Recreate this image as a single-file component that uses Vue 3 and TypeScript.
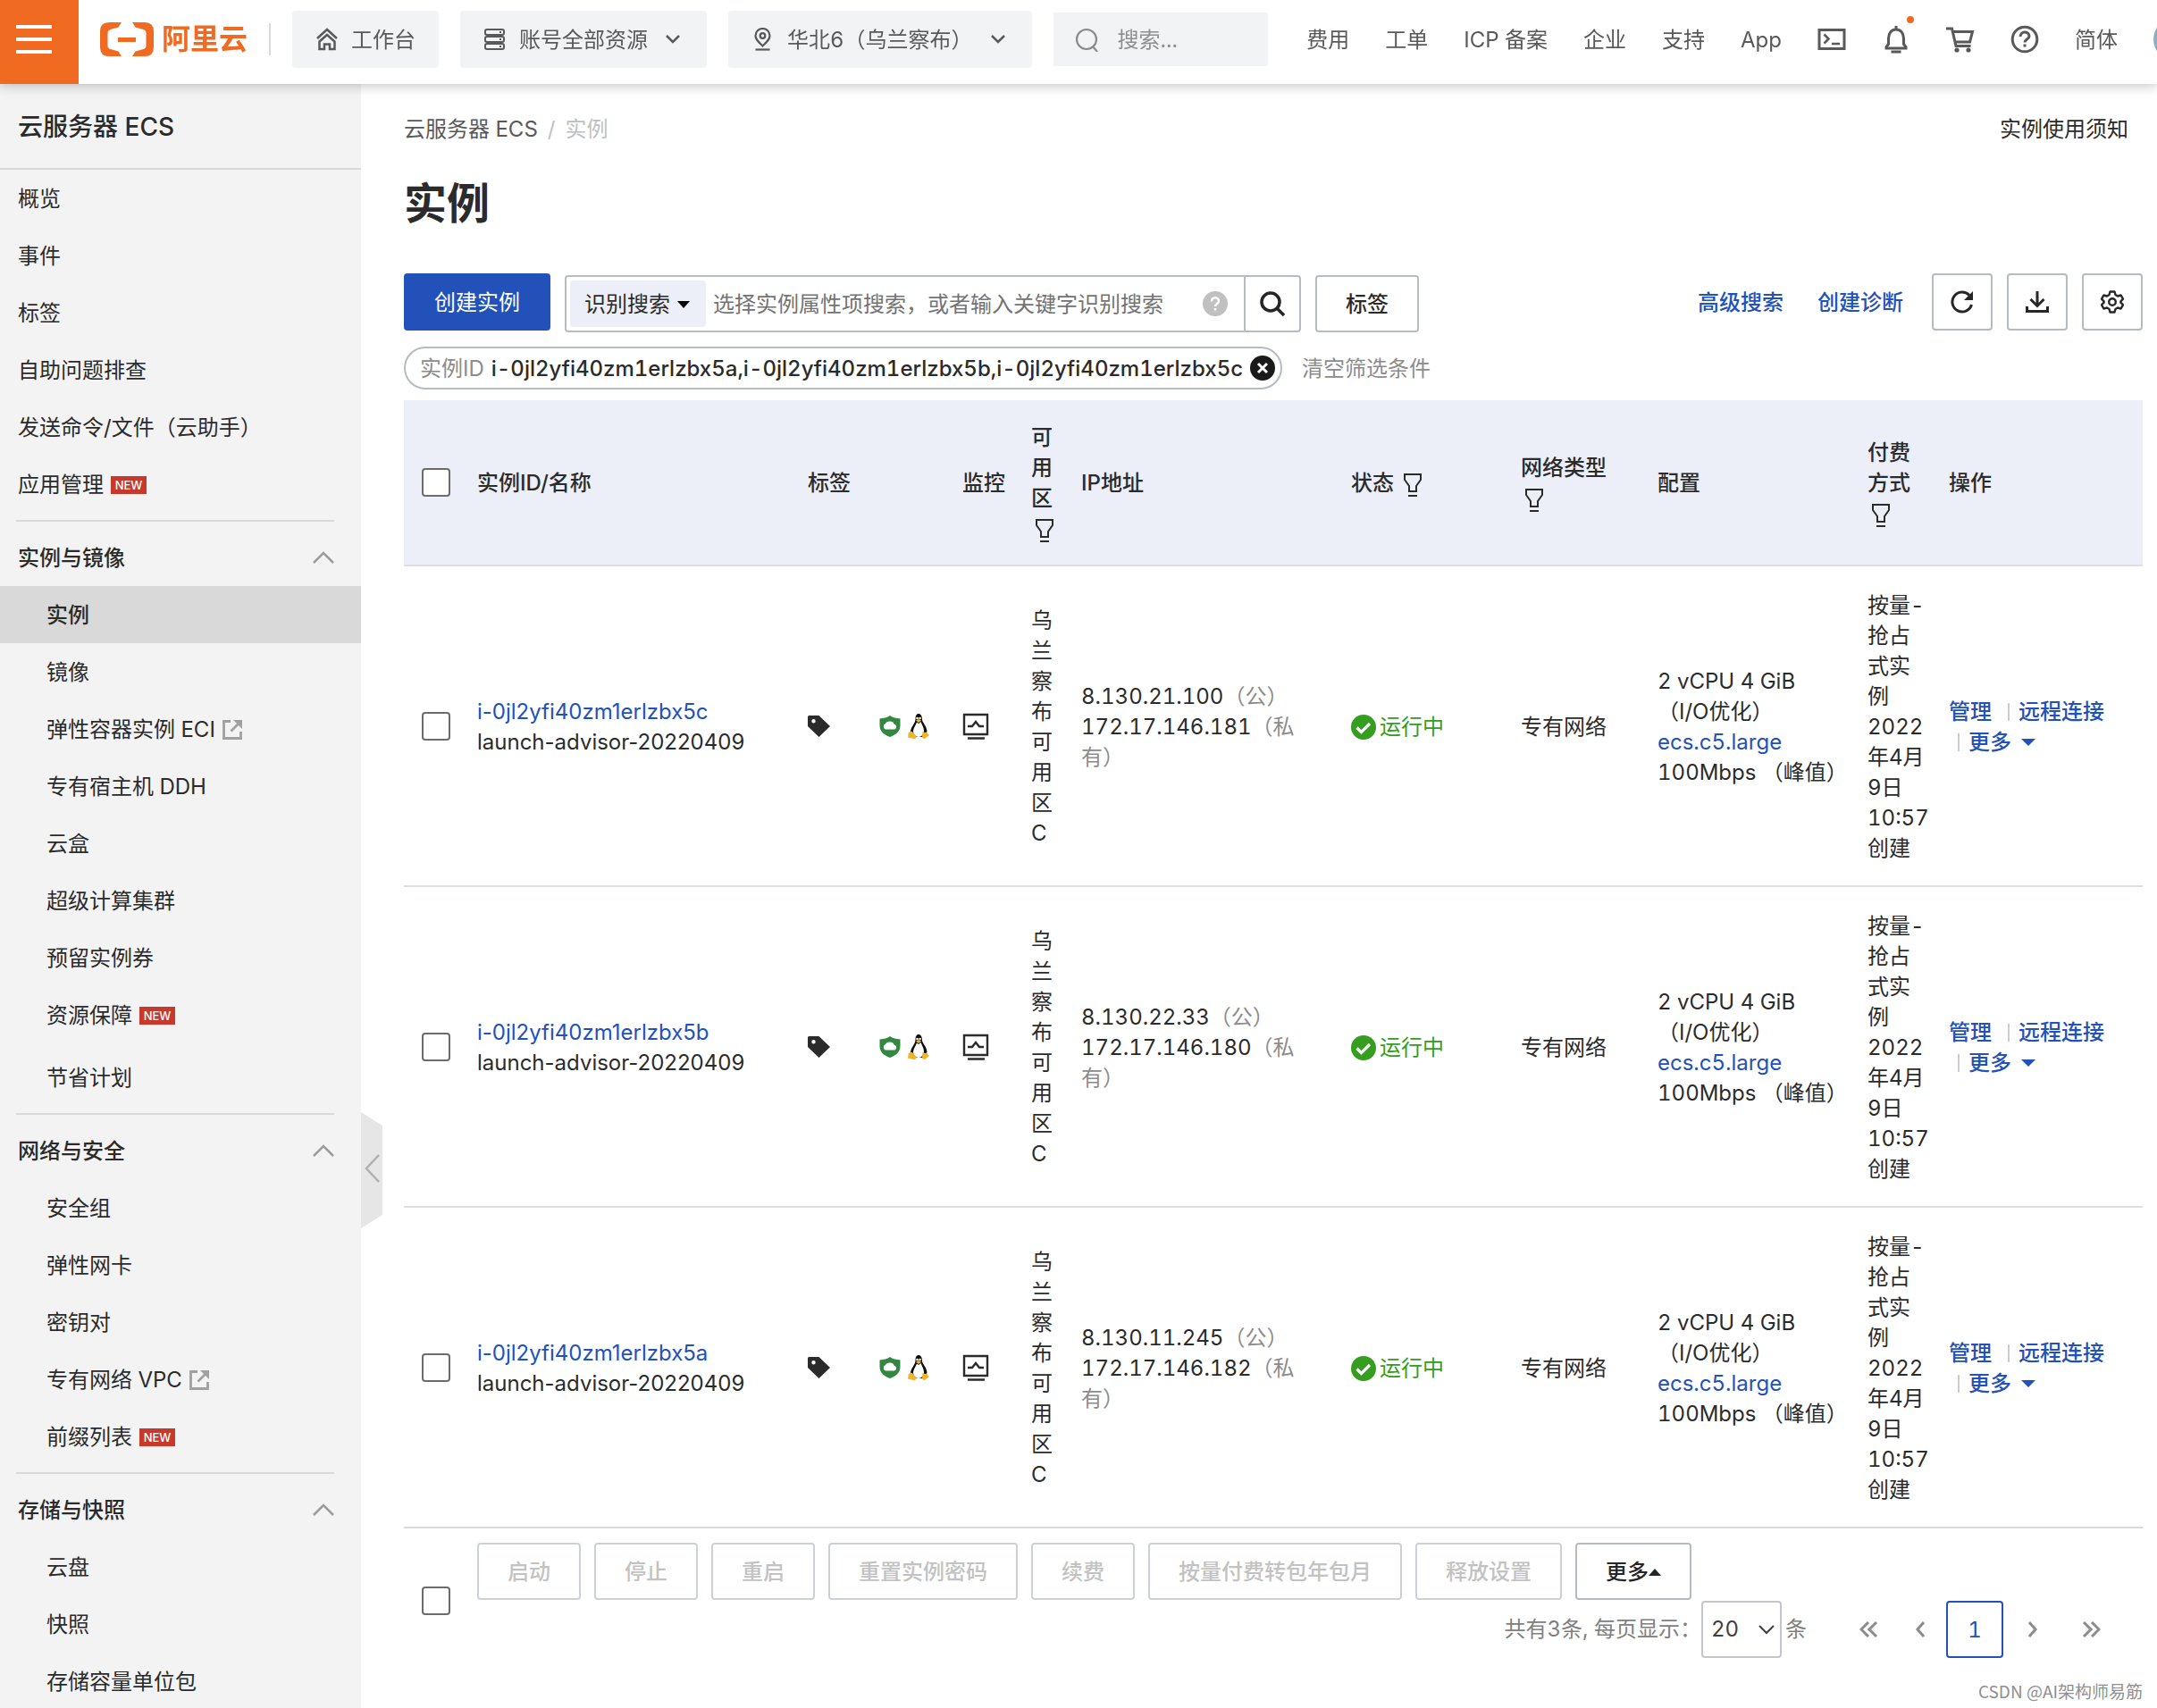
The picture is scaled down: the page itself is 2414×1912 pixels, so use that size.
<script setup lang="ts">
import { ref } from 'vue'

interface NavItem {
  label: string
  badge?: boolean
  external?: boolean
  active?: boolean
  spaced?: boolean
}

interface NavGroup {
  title: string
  items: NavItem[]
}

interface Instance {
  id: string
  name: string
  publicIp: string
  privateIp: string
}

const topItems: NavItem[] = [
  { label: '概览' },
  { label: '事件' },
  { label: '标签' },
  { label: '自助问题排查' },
  { label: '发送命令/文件（云助手）' },
  { label: '应用管理', badge: true },
]

const groups: NavGroup[] = [
  {
    title: '实例与镜像',
    items: [
      { label: '实例', active: true },
      { label: '镜像' },
      { label: '弹性容器实例 ECI', external: true },
      { label: '专有宿主机 DDH' },
      { label: '云盒' },
      { label: '超级计算集群' },
      { label: '预留实例券' },
      { label: '资源保障', badge: true },
      { label: '节省计划', spaced: true },
    ],
  },
  {
    title: '网络与安全',
    items: [
      { label: '安全组' },
      { label: '弹性网卡' },
      { label: '密钥对' },
      { label: '专有网络 VPC', external: true },
      { label: '前缀列表', badge: true },
    ],
  },
  {
    title: '存储与快照',
    items: [{ label: '云盘' }, { label: '快照' }, { label: '存储容量单位包' }],
  },
]

const headerLinks: string[] = ['费用', '工单', 'ICP 备案', '企业', '支持', 'App']

const instances: Instance[] = [
  { id: 'i-0jl2yfi40zm1erlzbx5c', name: 'launch-advisor-20220409', publicIp: '8.130.21.100', privateIp: '172.17.146.181' },
  { id: 'i-0jl2yfi40zm1erlzbx5b', name: 'launch-advisor-20220409', publicIp: '8.130.22.33', privateIp: '172.17.146.180' },
  { id: 'i-0jl2yfi40zm1erlzbx5a', name: 'launch-advisor-20220409', publicIp: '8.130.11.245', privateIp: '172.17.146.182' },
]

const filterValue = 'i-0jl2yfi40zm1erlzbx5a,i-0jl2yfi40zm1erlzbx5b,i-0jl2yfi40zm1erlzbx5c'
const billing = '按量-\n抢占\n式实\n例\n2022\n年4月\n9日\n10:57\n创建'
const batchActions: string[] = ['启动', '停止', '重启', '重置实例密码', '续费', '按量付费转包年包月', '释放设置']

const selected = ref<string[]>([])
const pageSize = ref('20')
</script>

<template>
  <div class="console">
    <header class="topbar">
      <button class="menu" aria-label="菜单"><i></i><i></i><i></i></button>
      <div class="topbar-row">
        <a class="logo" href="#">
          <svg width="60" height="38" viewBox="0 0 60 38" aria-hidden="true">
            <path fill="#f06a22" d="M24 0H10Q0 0 0 10v18q0 10 10 10h14l-3.500-5.500-9-2.500q-3-1-3-4V12q0-3 3-4l9-2.500zM36 0h14q10 0 10 10v18q0 10-10 10H36l3.500-5.500 9-2.500q3-1 3-4V12q0-3-3-4l-9-2.500zM20 17h20v5H20z" />
          </svg>
          <span>阿里云</span>
        </a>
        <span class="split"></span>
        <button class="chip">
          <svg width="26" height="26" viewBox="0 0 26 26" fill="none" stroke="#595959" stroke-width="2.500">
            <path d="M2 12 13 2l11 10" /><path d="M4.500 15.500 13 8l8.500 7.500V24H16v-5.500h-6V24H4.500z" />
          </svg>
          <span>工作台</span>
        </button>
        <button class="chip">
          <svg width="26" height="26" viewBox="0 0 26 26" fill="none" stroke="#595959" stroke-width="2">
            <rect x="2" y="2" width="21" height="6" rx="2" /><rect x="2" y="10" width="21" height="6" rx="2" /><rect x="2" y="18" width="21" height="6" rx="2" />
            <path d="M18 5h2M18 13h2M18 21h2" />
          </svg>
          <span>账号全部资源</span>
          <svg class="down" width="18" height="18" viewBox="0 0 18 18" fill="none" stroke="#595959" stroke-width="2.500"><path d="m2 5 7 7 7-7" /></svg>
        </button>
        <button class="chip">
          <svg width="26" height="26" viewBox="0 0 26 26" fill="none" stroke="#595959" stroke-width="2.200">
            <path d="M12.500 20.500C7.500 15.500 4.500 13 4.500 9a8 8 0 0 1 16 0c0 4-3 6.500-8 11.500z" /><circle cx="12.500" cy="9" r="2.800" /><path d="M4.500 24.500h16" />
          </svg>
          <span>华北6（乌兰察布）</span>
          <svg class="down" width="18" height="18" viewBox="0 0 18 18" fill="none" stroke="#595959" stroke-width="2.500"><path d="m2 5 7 7 7-7" /></svg>
        </button>
        <label class="global-search">
          <svg width="28" height="28" viewBox="0 0 28 28" fill="none" stroke="#8a8a8a" stroke-width="2.200"><circle cx="13" cy="14" r="11" /><path d="m20 22 5 6" /></svg>
          <input type="text" placeholder="搜索..." aria-label="搜索" />
        </label>
        <nav class="header-nav">
          <a v-for="link in headerLinks" :key="link" class="text" href="#">{{ link }}</a>
          <a href="#" aria-label="终端">
            <svg width="32" height="32" viewBox="0 0 32 32" fill="none" stroke="#595959" stroke-width="3"><path d="M2 5.500h28v21H2z" /><path stroke-width="2.500" d="m7.500 10.500 5 5-5 5M16 21h9" /></svg>
          </a>
          <a href="#" class="bell" aria-label="通知">
            <svg width="32" height="32" viewBox="0 0 32 32" fill="none" stroke="#595959" stroke-width="3"><path d="M5 26v-1.500l2.500-3V15c0-6 3.500-10 8.500-10s8.500 4 8.500 10v6.500l2.500 3V26zM16 5V1M10.500 30h11" /></svg>
          </a>
          <a href="#" aria-label="购物车">
            <svg width="32" height="32" viewBox="0 0 32 32" fill="none" stroke="#595959" stroke-width="3"><path d="M0 4h6.500l4.500 19.500h16.500M7.500 7.500h22l-3 11.500H10.500" /><circle cx="12" cy="28" r="2.600" fill="#595959" stroke="none" /><circle cx="25" cy="28" r="2.600" fill="#595959" stroke="none" /></svg>
          </a>
          <a href="#" aria-label="帮助">
            <svg width="32" height="32" viewBox="0 0 32 32" fill="none" stroke="#595959" stroke-width="3"><circle cx="16" cy="16" r="13.800" /><path d="M11 13c0-6.500 10-6.500 10-.5 0 3.500-5 3.500-5 7" /><path d="M16 21.500v3" /></svg>
          </a>
          <a class="text" href="#">简体</a>
          <span class="avatar"></span>
        </nav>
      </div>
    </header>

    <div class="body">
      <aside class="sidebar">
        <h2>云服务器 ECS</h2>
        <a v-for="item in topItems" :key="item.label" class="item" href="#">
          {{ item.label }}<span v-if="item.badge" class="badge">NEW</span>
        </a>
        <template v-for="group in groups" :key="group.title">
          <hr />
          <button class="group">
            {{ group.title }}
            <svg width="24" height="16" viewBox="0 0 24 16" fill="none" stroke="#9b9b9b" stroke-width="2.500"><path d="M1 13 12 2l11 11" /></svg>
          </button>
          <a
            v-for="item in group.items"
            :key="item.label"
            class="item sub"
            :class="{ active: item.active, spaced: item.spaced }"
            href="#"
          >
            {{ item.label }}<span v-if="item.badge" class="badge">NEW</span>
            <svg v-if="item.external" width="22" height="22" viewBox="0 0 22 22" fill="none" stroke="#a0a0a0" stroke-width="2.800"><path d="M9 1.500H1.500v19h19V13M9.500 12.500l9-9" /><path fill="#a0a0a0" stroke="none" d="M12 0h10v10z" /></svg>
          </a>
        </template>
      </aside>

      <button class="collapse" aria-label="收起">
        <svg width="24" height="130" viewBox="0 0 24 130"><path fill="#e6e6e6" d="M0 0l24 15v100L0 130z" /><path fill="none" stroke="#b0b0b0" stroke-width="2.500" d="M20 48 6 63l14 15" /></svg>
      </button>

      <main>
        <div class="crumbs">
          <nav><a href="#">云服务器 ECS</a><i>/</i><span>实例</span></nav>
          <a class="notice" href="#">实例使用须知</a>
        </div>
        <h1>实例</h1>

        <div class="toolbar">
          <button class="primary">创建实例</button>
          <div class="finder-group">
            <div class="finder">
              <button class="mode">识别搜索<svg width="14" height="8" viewBox="0 0 14 8"><path d="M0 0h14L7 8z" /></svg></button>
              <input type="text" placeholder="选择实例属性项搜索，或者输入关键字识别搜索" aria-label="搜索实例" />
              <svg class="help" width="28" height="28" viewBox="0 0 28 28" fill="none" stroke="#fff" stroke-width="2.500"><circle cx="14" cy="14" r="14" fill="#c0c0c0" stroke="none" /><path d="M10 11.500c0-5.500 8-5.500 8-.5 0 3-4 3-4 6M14 19v2.500" /></svg>
              <button class="go" aria-label="搜索">
                <svg width="30" height="30" viewBox="0 0 30 30" fill="none" stroke="#262626" stroke-width="3.500"><circle cx="13" cy="13" r="10" /><path d="m20 20 8 8" /></svg>
              </button>
            </div>
            <button class="outline">标签</button>
          </div>
          <div class="tools">
            <a href="#">高级搜索</a>
            <a href="#">创建诊断</a>
            <button aria-label="刷新">
              <svg width="26" height="26" viewBox="0 0 26 26" fill="none" stroke="#262626" stroke-width="3"><path d="M23.500 16A11 11 0 1 1 21 5.500" /><path fill="#262626" stroke="none" d="M25 1v10H15z" /></svg>
            </button>
            <button aria-label="下载">
              <svg width="26" height="26" viewBox="0 0 26 26" fill="none" stroke="#262626" stroke-width="3"><path d="M13 1v15M5.500 10l7.500 7.500L20.500 10M1.500 18v5.500h23V18" /></svg>
            </button>
            <button aria-label="设置">
              <svg width="26" height="26" viewBox="0 0 26 26" fill="none" stroke="#262626" stroke-width="2.400"><path stroke-linejoin="round" d="M10.500 1.500h5l1 3.500 2.500 1.500 3.600-1 2.400 4.200-2.600 2.600v1.400l2.600 2.600-2.400 4.200-3.600-1-2.500 1.500-1 3.500h-5l-1-3.500L7 19.500l-3.600 1L1 16.300l2.600-2.600v-1.400L1 9.700l2.400-4.200 3.600 1L9.500 5z" /><circle cx="13" cy="13" r="3.800" /></svg>
            </button>
          </div>
        </div>

        <div class="filters">
          <div class="pill">
            <span>实例ID</span><b>{{ filterValue }}</b>
            <button aria-label="移除筛选"><svg width="28" height="28" viewBox="0 0 28 28"><circle cx="14" cy="14" r="14" fill="#1a1a1a" /><path fill="none" stroke="#fff" stroke-width="3" d="m9 9 10 10M19 9 9 19" /></svg></button>
          </div>
          <button class="clear">清空筛选条件</button>
        </div>

        <table>
          <colgroup>
            <col class="w-check" /><col class="w-name" /><col class="w-tag" /><col class="w-os" /><col class="w-monitor" /><col class="w-zone" />
            <col class="w-ip" /><col class="w-state" /><col class="w-net" /><col class="w-spec" /><col class="w-bill" /><col class="w-action" />
          </colgroup>
          <thead>
            <tr>
              <th><input type="checkbox" aria-label="全选" /></th>
              <th>实例ID/名称</th>
              <th>标签</th>
              <th></th>
              <th class="nowrap">监控</th>
              <th>可用区<svg class="funnel" viewBox="0 0 20 26"><path d="M1 1h18v6l-5 7v6H6v-6L1 7zM5 25h10" /></svg></th>
              <th>IP地址</th>
              <th>状态 <svg class="funnel" viewBox="0 0 20 26"><path d="M1 1h18v6l-5 7v6H6v-6L1 7zM5 25h10" /></svg></th>
              <th>网络类型<br /><svg class="funnel" viewBox="0 0 20 26"><path d="M1 1h18v6l-5 7v6H6v-6L1 7zM5 25h10" /></svg></th>
              <th>配置</th>
              <th>付费方式<br /><svg class="funnel" viewBox="0 0 20 26"><path d="M1 1h18v6l-5 7v6H6v-6L1 7zM5 25h10" /></svg></th>
              <th>操作</th>
            </tr>
          </thead>
          <tbody>
            <tr v-for="row in instances" :key="row.id">
              <td class="icon"><input v-model="selected" type="checkbox" :value="row.id" :aria-label="row.id" /></td>
              <td class="name"><a href="#">{{ row.id }}</a><br />{{ row.name }}</td>
              <td class="icon">
                <svg width="26" height="26" viewBox="0 0 26 26"><path fill="#2b2b2b" fill-rule="evenodd" d="M0 2.500Q0 1 1.500 1H12.500L25 13 12.500 25 0 13zM6.500 5a2.200 2.200 0 1 0 0 4.400 2.200 2.200 0 0 0 0-4.400z" /></svg>
              </td>
              <td class="icon">
                <span class="os">
                  <svg width="24" height="24" viewBox="0 0 24 24"><path fill="#338741" d="M12 0c3 2.500 7 3 11.500 3.500V11c0 6.500-4.500 10.500-11.500 13C5 21.500.5 17.500.5 11V3.500C5 3 9 2.500 12 0z" /><path fill="#fff" d="M7.500 15.500a3.400 3.400 0 0 1-.5-6.500c.8-1.600 2-2.500 4.800-2.500 3 0 4.200 1.300 4.700 3 3.500.5 3.500 6 0 6z" /></svg>
                  <svg width="24" height="28" viewBox="0 0 24 28">
                    <path fill="#0c0c0c" d="M8.500 6C8.500 2.500 9.500 0 12 0s4 2.500 4 6.500c0 3 5 7 5.500 13L19 26H5l-2-6C3.500 14 8.500 11 8.500 6z" />
                    <path fill="#fff" d="M10 9.500 12 11l2.500-2c1 3 3.500 6 3.500 10 0 4-2.500 7-6 7s-6-3-6-6.500S9 13 10 9.500z" />
                    <circle cx="10.500" cy="5" r="1.300" fill="#fff" /><circle cx="13.600" cy="5" r="1.300" fill="#fff" />
                    <path fill="#edb52c" d="m9 7.500 3-1.500 3.200 1.500L12 10zM4.500 19.500l5 6c0 2-1.500 2.500-3 2.500L0 26.500l.8-5.500zM16.500 20l3 1 2-.8.8 2.300L24 24l-5 4c-2 0-3-.8-3-2.500z" />
                  </svg>
                </span>
              </td>
              <td class="icon">
                <svg width="30" height="30" viewBox="0 0 30 30" fill="none" stroke="#2b2b2b" stroke-width="2.400"><path d="M2 2h26v22H2zM6 28.500h19M6 15h5l4-5 4 5h5" /></svg>
              </td>
              <td>乌兰察布可用区C</td>
              <td>{{ row.publicIp }}<em>（公）</em><br />{{ row.privateIp }}<em>（私</em><br /><em>有）</em></td>
              <td>
                <span class="state">
                  <svg width="28" height="28" viewBox="0 0 28 28"><circle cx="14" cy="14" r="14" fill="#359d20" /><path fill="none" stroke="#fff" stroke-width="3.200" d="m6.500 14.500 5 5 9.500-9.500" /></svg>
                  运行中
                </span>
              </td>
              <td>专有网络</td>
              <td class="nowrap">2 vCPU 4 GiB<br />（I/O优化）<br /><a href="#">ecs.c5.large</a><br />100Mbps （峰值）</td>
              <td class="bill">{{ billing }}</td>
              <td class="actions">
                <div><a href="#">管理</a><i></i><a href="#">远程连接</a></div>
                <div><i></i><a href="#">更多<svg width="16" height="8" viewBox="0 0 16 8"><path fill="#2251ba" d="M0 0h16L8 8z" /></svg></a></div>
              </td>
            </tr>
          </tbody>
        </table>

        <div class="footer">
          <input type="checkbox" aria-label="选择全部实例" />
          <div class="footer-main">
            <div class="batch">
              <button v-for="action in batchActions" :key="action" disabled>{{ action }}</button>
              <button class="more">更多<svg width="14" height="8" viewBox="0 0 14 8"><path fill="#262626" d="M0 8h14L7 0z" /></svg></button>
            </div>
            <div class="pager">
              <label for="page-size">共有3条, 每页显示：</label>
              <span class="size">
                <select id="page-size" v-model="pageSize"><option>20</option><option>50</option><option>100</option></select>
                <svg width="18" height="12" viewBox="0 0 18 12" fill="none" stroke="#404040" stroke-width="2"><path d="m1 2 8 8 8-8" /></svg>
              </span>
              <span class="unit">条</span>
              <button class="prev" aria-label="第一页"><svg width="20" height="20" viewBox="0 0 20 20"><path d="m10 2-8 8 8 8M19 2l-8 8 8 8" /></svg></button>
              <button class="prev" aria-label="上一页"><svg width="10" height="20" viewBox="0 0 10 20"><path d="M9 2 2 10l7 8" /></svg></button>
              <button class="current">1</button>
              <button class="next" aria-label="下一页"><svg width="10" height="20" viewBox="0 0 10 20"><path d="m1 2 7 8-7 8" /></svg></button>
              <button class="next" aria-label="最后一页"><svg width="20" height="20" viewBox="0 0 20 20"><path d="m1 2 8 8-8 8M10 2l8 8-8 8" /></svg></button>
            </div>
          </div>
        </div>
      </main>
    </div>
    <div class="watermark">CSDN @AI架构师易筋</div>
  </div>
</template>

<style>
body {
  margin: 0;
  background: #fff;
}
</style>

<style scoped>
.console {
  position: relative;
  display: flex;
  flex-direction: column;
  height: 100vh;
  overflow: hidden;
  color: #2b2b2b;
  font: 24px/34px Inter, 'Noto Sans CJK SC', sans-serif;
  font-variant-numeric: tabular-nums;
}
.console * {
  box-sizing: border-box;
}
button,
input,
select {
  margin: 0;
  padding: 0;
  border: 0;
  background: none;
  color: inherit;
  font: inherit;
  font-variant-numeric: tabular-nums;
}
button svg,
label svg,
a svg {
  flex: none;
}
a {
  color: #2251ba;
  text-decoration: none;
}
i,
em {
  font-style: normal;
}

/* top bar */
.topbar {
  position: relative;
  z-index: 2;
  display: flex;
  flex: none;
  height: 94px;
  background: #fff;
  box-shadow: 0 2px 12px rgba(0, 0, 0, 0.24);
}
.menu {
  display: flex;
  flex: none;
  flex-direction: column;
  align-items: center;
  justify-content: center;
  gap: 10px;
  width: 88px;
  padding: 0 12px 6px 0;
  background: #f06a22;
}
.menu i {
  width: 40px;
  height: 4px;
  background: #fff;
}
.topbar-row {
  display: flex;
  flex: 1;
  align-items: center;
  gap: 24px;
  padding: 0 0 6px 24px;
}
.logo {
  display: flex;
  align-items: center;
  gap: 9px;
  color: #f06a22;
  font-size: 32px;
  font-weight: 700;
}
.split {
  width: 2px;
  height: 36px;
  background: #d9d9d9;
}
.chip {
  display: flex;
  flex: none;
  align-items: center;
  gap: 14px;
  height: 64px;
  padding: 0 26px;
  border-radius: 4px;
  background: #f2f3f5;
  color: #595959;
}
.chip span,
.global-search input,
.header-nav .text {
  padding-top: 2px;
}
.down {
  margin: 0 3px 0 5px;
}
.global-search {
  display: flex;
  flex: none;
  align-items: center;
  gap: 20px;
  width: 240px;
  height: 60px;
  padding: 0 24px;
  background: #f2f3f5;
}
.global-search input {
  width: 100%;
  min-width: 0;
}
.global-search input::placeholder {
  color: #8f8f8f;
  opacity: 1;
}
.header-nav {
  display: flex;
  flex: none;
  align-items: center;
  gap: 40px;
  margin-left: auto;
}
.header-nav a {
  position: relative;
  color: #595959;
}
.header-nav svg {
  display: block;
}
.bell::after {
  position: absolute;
  top: -10px;
  right: -4px;
  width: 8px;
  height: 8px;
  border-radius: 50%;
  background: #f06a22;
  content: '';
}
.avatar {
  width: 48px;
  height: 48px;
  margin-right: -44px;
  border-radius: 50%;
  background: #8fb0c4;
}

/* sidebar */
.body {
  position: relative;
  display: flex;
  flex: 1;
  min-height: 0;
}
.sidebar {
  flex: none;
  width: 404px;
  overflow-y: auto;
  background: #f3f3f3;
  scrollbar-width: none;
}
.sidebar h2 {
  height: 96px;
  margin: 0;
  padding-left: 20px;
  border-bottom: 2px solid #d9d9d9;
  font-size: 28px;
  font-weight: 500;
  line-height: 96px;
}
.item,
.group {
  display: flex;
  align-items: center;
  width: 100%;
  height: 64px;
  padding: 2px 30px 0 20px;
  color: #2b2b2b;
}
.item.sub {
  padding-left: 52px;
}
.item svg {
  margin-left: 8px;
}
.group {
  justify-content: space-between;
  font-weight: 500;
}
.item.active {
  background: #d9d9d9;
  font-weight: 500;
}
.item.spaced {
  margin-top: 6px;
}
.badge {
  width: 40px;
  height: 20px;
  margin-left: 8px;
  background: #c7392a;
  color: #fff;
  font-size: 13px;
  font-weight: 500;
  line-height: 20px;
  text-align: center;
}
.sidebar hr {
  height: 2px;
  margin: 8px 30px 8px 18px;
  border: 0;
  background: #d9d9d9;
}
.collapse {
  position: absolute;
  top: 1151px;
  left: 404px;
  height: 130px;
}
.collapse svg {
  display: block;
}

/* content */
main {
  flex: 1;
  min-width: 0;
  padding: 34px 16px 0 48px;
  overflow-y: auto;
  scrollbar-width: none;
}
.crumbs {
  display: flex;
  justify-content: space-between;
  padding-right: 16px;
}
.crumbs a {
  color: #595959;
}
.crumbs i {
  margin: 0 11px;
  color: #bfbfbf;
}
.crumbs span {
  color: #bfbfbf;
}
.crumbs .notice {
  color: #2b2b2b;
}
h1 {
  margin: 36px 0 48px;
  font-size: 48px;
  font-weight: 700;
  line-height: 60px;
}
.toolbar {
  display: flex;
  align-items: flex-start;
  gap: 16px;
  height: 66px;
}
.primary {
  width: 164px;
  height: 64px;
  padding-top: 2px;
  border-radius: 4px;
  background: #2251ba;
  color: #fff;
}
.finder-group {
  display: flex;
  gap: 16px;
  padding-top: 2px;
}
.finder {
  display: flex;
  align-items: center;
  width: 824px;
  height: 64px;
  padding-left: 4px;
  border: 2px solid #b6bbc3;
  border-radius: 4px;
}
.mode {
  display: flex;
  flex: none;
  align-items: center;
  gap: 8px;
  height: 52px;
  padding: 2px 18px 0 16px;
  border-radius: 4px;
  background: #eceff7;
}
.finder input {
  flex: 1;
  min-width: 0;
  padding: 2px 0 0 8px;
}
.finder input::placeholder {
  color: #737373;
  opacity: 1;
}
.help {
  flex: none;
  margin-right: 18px;
}
.go {
  display: flex;
  flex: none;
  align-items: center;
  justify-content: center;
  width: 62px;
  height: 60px;
  border-left: 2px solid #b6bbc3;
}
.outline {
  width: 116px;
  height: 64px;
  padding-top: 2px;
  border: 2px solid #b6bbc3;
  border-radius: 4px;
  font-weight: 500;
}
.tools {
  display: flex;
  align-items: center;
  gap: 16px;
  margin-left: auto;
}
.tools a {
  margin-right: 22px;
  padding-top: 2px;
  font-weight: 500;
}
.tools a + button {
  margin-left: -6px;
}
.tools button {
  display: flex;
  align-items: center;
  justify-content: center;
  width: 68px;
  height: 64px;
  border: 2px solid #b6bbc3;
  border-radius: 4px;
}
.filters {
  display: flex;
  align-items: center;
  gap: 22px;
  margin: 16px 0 12px;
}
.pill {
  display: flex;
  align-items: center;
  height: 48px;
  padding: 0 6px 0 16px;
  border: 2px solid #b6bbc3;
  border-radius: 24px;
}
.pill span {
  margin-right: 8px;
  padding-top: 2px;
  color: #8c8c8c;
}
.pill b {
  padding-top: 2px;
  font-weight: 500;
}
.pill button {
  margin-left: 8px;
}
.pill svg {
  display: block;
}
.clear {
  padding-top: 2px;
  color: #8c8c8c;
}

/* table */
table {
  width: 100%;
  border-collapse: separate;
  border-spacing: 0;
  table-layout: fixed;
}
.w-check { width: 66px; }
.w-name { width: 370px; }
.w-tag { width: 80px; }
.w-os { width: 93px; }
.w-monitor { width: 77px; }
.w-zone { width: 56px; }
.w-ip { width: 302px; }
.w-state { width: 190px; }
.w-net { width: 153px; }
.w-spec { width: 235px; }
.w-bill { width: 91px; }
.w-action { width: 233px; }
th,
td {
  padding: 25px 16px 23px;
  border-bottom: 2px solid #dce0e6;
  text-align: left;
  vertical-align: middle;
}
th {
  height: 186px;
  background: #eceff7;
  font-weight: 500;
}
td {
  height: 359px;
}
td.icon,
th:first-child {
  padding-top: 24px;
  padding-bottom: 24px;
}
td.name {
  font-variant-numeric: normal;
}
tbody tr:last-child td {
  border-color: #d9d9d9;
}
th:first-child,
td:first-child {
  padding-left: 20px;
}
th:nth-child(6),
td:nth-child(6) {
  word-break: break-all;
}
td svg {
  display: block;
}
td em {
  color: #8c8c8c;
}
input[type='checkbox'] {
  display: block;
  width: 32px;
  height: 32px;
  border: 2px solid #6b6b6b;
  border-radius: 4px;
  background: #fff;
  appearance: none;
}
.funnel {
  width: 20px;
  height: 26px;
  margin-left: 5px;
  vertical-align: -7px;
  fill: none;
  stroke: #2b2b2b;
  stroke-width: 2;
}
.os {
  display: flex;
  align-items: center;
  gap: 8px;
}
.state {
  display: flex;
  align-items: center;
  gap: 4px;
  color: #359d20;
  white-space: nowrap;
}
.nowrap {
  white-space: nowrap;
}
.bill {
  white-space: pre;
}
.actions {
  font-weight: 500;
}
.actions div {
  display: flex;
  align-items: center;
}
.actions a {
  display: flex;
  align-items: center;
}
.actions i {
  width: 2px;
  height: 20px;
  margin: 0 10px;
  background: #cccccc;
}
.actions a + i {
  margin-left: 18px;
}
.actions svg {
  margin-left: 11px;
}

/* footer */
.footer {
  display: flex;
  align-items: center;
  padding: 16px 0 0 20px;
}
.footer input {
  flex: none;
  margin-right: 30px;
}
.footer-main {
  flex: 1;
}
.batch {
  display: flex;
  gap: 15px;
}
.batch button {
  height: 64px;
  padding: 2px 32px 0;
  border: 2px solid #cdd1d7;
  border-radius: 4px;
  color: #c2c2c2;
  font-weight: 500;
}
.batch .more {
  display: flex;
  align-items: center;
  border-color: #b6bbc3;
  color: #262626;
}
.pager {
  display: flex;
  align-items: center;
  justify-content: flex-end;
  height: 66px;
  padding-right: 24px;
  color: #808080;
}
.size {
  position: relative;
}
.size select {
  display: block;
  width: 90px;
  height: 64px;
  padding-left: 9px;
  border: 2px solid #c4c6cc;
  border-radius: 4px;
  color: #404040;
  appearance: none;
}
.size svg {
  position: absolute;
  top: 26px;
  right: 8px;
  pointer-events: none;
}
.unit {
  margin: 0 40px 0 4px;
}
.pager button {
  display: flex;
  align-items: center;
  justify-content: center;
  height: 64px;
}
.pager button svg {
  fill: none;
  stroke: #8c8c8c;
  stroke-width: 3;
}
.prev {
  width: 58px;
}
.next {
  width: 66px;
}
.pager .current {
  width: 64px;
  padding-top: 2px;
  border: 2px solid #2251ba;
  border-radius: 4px;
  color: #2251ba;
}
.watermark {
  position: absolute;
  right: 16px;
  bottom: 4px;
  color: #8f8f8f;
  font-family: 'Noto Sans CJK SC', sans-serif;
  font-size: 19px;
  line-height: 30px;
}
</style>
